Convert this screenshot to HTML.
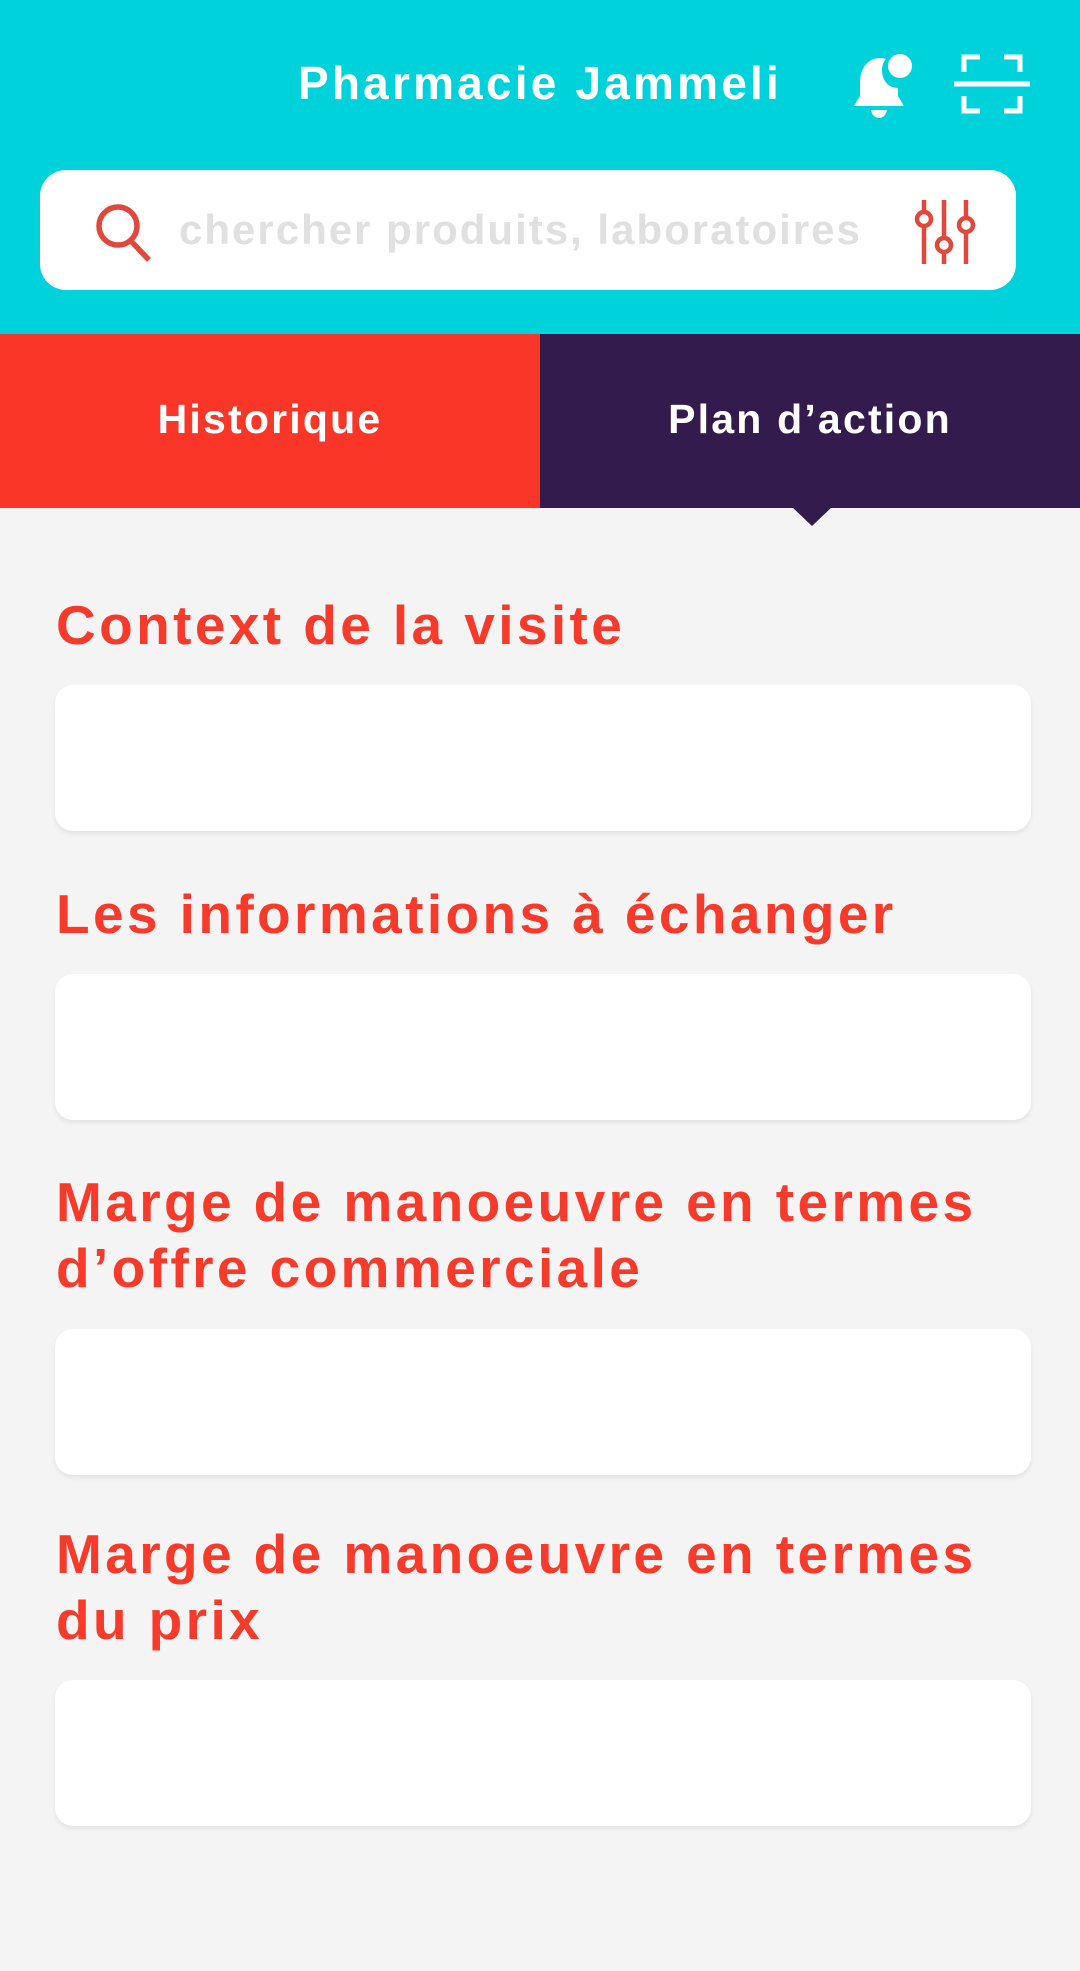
<!DOCTYPE html>
<html><head><meta charset="utf-8"><style>
*{margin:0;padding:0;box-sizing:border-box}
body{width:1080px;height:1971px;background:#f4f4f4;font-family:"Liberation Sans",sans-serif;position:relative;overflow:hidden}
.hdr{position:absolute;left:0;top:0;width:1080px;height:334px;background:#00d2dc}
.title{position:absolute;left:280px;width:520px;top:56px;text-align:center;color:#fff;font-weight:bold;font-size:46px;letter-spacing:3.2px}
.search{position:absolute;left:40px;top:170px;width:976px;height:120px;background:#fff;border-radius:26px}
.ph{position:absolute;left:139px;top:36px;font-size:42px;font-weight:bold;color:#e0e0e0;letter-spacing:2px;white-space:nowrap}
.tab{position:absolute;top:334px;height:174px;width:540px;color:#fff;font-weight:bold;font-size:41px;letter-spacing:2.2px;text-align:center;line-height:170px}
.lbl{position:absolute;left:56px;color:#f73a2a;font-weight:bold;font-size:55px;letter-spacing:3.4px;line-height:66px;white-space:nowrap}
.box{position:absolute;left:55px;width:976px;height:146px;background:#fff;border-radius:18px;box-shadow:0 3px 5px rgba(0,0,0,0.07)}
</style></head><body>
<div class="hdr">
<div class="title">Pharmacie Jammeli</div>
<svg style="position:absolute;left:848px;top:50px" width="70" height="70" viewBox="0 0 70 70">
<path d="M30 8 C18 10 12 20 12 32 L12 46 L6 56 L56 56 L50 46 L50 38 C40 38 34 30 34 20 C34 15 36 11 38 9 C35 8 33 8 30 8Z" fill="#fff"/>
<circle cx="52" cy="16" r="12" fill="#fff"/>
<path d="M23 60 L39 60 C38 66 34 68 31 68 C28 68 24 66 23 60Z" fill="#fff"/>
</svg>
<svg style="position:absolute;left:952px;top:54px" width="80" height="60" viewBox="0 0 80 60" fill="none" stroke="#fff" stroke-width="5">
<path d="M12 18 V3 H28 M52 3 H68 V18 M12 42 V57 H28 M52 57 H68 V42"/>
<path d="M2 30 H78"/>
</svg>
<div class="search">
<svg style="position:absolute;left:54px;top:32px" width="62" height="62" viewBox="0 0 62 62" fill="none" stroke="#e1473a" stroke-width="5.5">
<circle cx="24" cy="24" r="19"/><path d="M37 39 L55 58"/>
</svg>
<div class="ph">chercher produits, laboratoires</div>
<svg style="position:absolute;left:870px;top:28px" width="70" height="70" viewBox="0 0 70 70" fill="none" stroke="#e1473a" stroke-width="4.5">
<path d="M14 2 V14 M14 28 V66 M34 2 V40 M34 54 V66 M56 2 V20 M56 34 V66"/>
<circle cx="14" cy="21" r="7"/><circle cx="34" cy="47" r="7"/><circle cx="56" cy="27" r="7"/>
</svg>
</div>
</div>
<div class="tab" style="left:0;background:#fa3629">Historique</div>
<div class="tab" style="left:540px;background:#331c4d">Plan d’action</div>
<svg style="position:absolute;left:792px;top:507px" width="40" height="20"><path d="M0 0 L40 0 L20 19Z" fill="#331c4d"/></svg>

<div class="lbl" style="top:592px">Context de la visite</div>
<div class="box" style="top:685px"></div>
<div class="lbl" style="top:881px">Les informations à échanger</div>
<div class="box" style="top:974px"></div>
<div class="lbl" style="top:1169px">Marge de manoeuvre en termes<br>d’offre commerciale</div>
<div class="box" style="top:1329px"></div>
<div class="lbl" style="top:1521px">Marge de manoeuvre en termes<br>du prix</div>
<div class="box" style="top:1680px"></div>
</body></html>
